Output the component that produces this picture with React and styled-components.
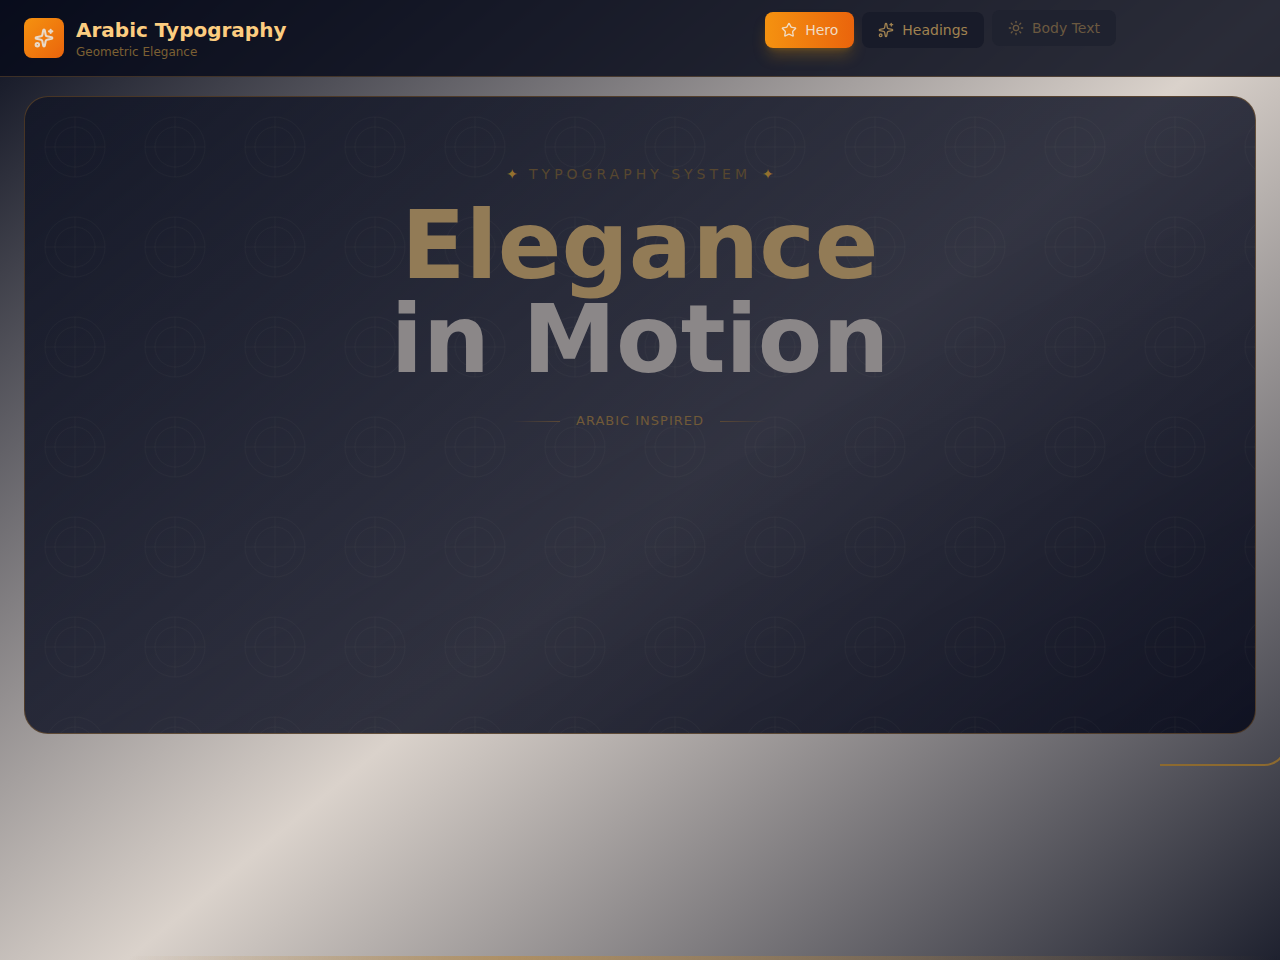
import React from 'react';
import styled, { createGlobalStyle } from 'styled-components';
import { Sparkles, Star, Sun } from 'lucide-react';

const GlobalStyle = createGlobalStyle`
  body {
    margin: 0;
    background: #0a0e1e;
    font-family: "DejaVu Sans", sans-serif;
  }
`;

const Page = styled.div`
  box-sizing: border-box;
  position: relative;
  min-height: 100vh;
  overflow: hidden;
  background: linear-gradient(to bottom right, #0a0e1e, #dad2cb, #0a0e1e) no-repeat;
  background-size: 100% 111%;
`;

const Header = styled.header`
  display: flex;
  align-items: center;
  justify-content: space-between;
  height: 76px;
  padding: 0 24px;
  border-bottom: 1px solid rgba(180, 125, 60, 0.3);
  background: rgba(8, 12, 28, 0.84);
`;

const Brand = styled.div`
  display: flex;
  align-items: center;
  gap: 12px;
`;

const Logo = styled.div`
  display: flex;
  align-items: center;
  justify-content: center;
  width: 40px;
  height: 40px;
  border-radius: 8px;
  color: #e8d9c8;
  background: linear-gradient(to bottom right, #f59210, #ea640c);
`;

const BrandName = styled.div`
  color: #fccd80;
  font-size: 20px;
  font-weight: 700;
  line-height: 28px;
`;

const Tagline = styled.div`
  color: #7c6033;
  font-size: 12px;
  line-height: 16px;
`;

const Nav = styled.nav`
  display: flex;
  align-self: flex-start;
  gap: 8px;
  margin-right: 140px;
  padding-top: 12px;
`;

const NavButton = styled.button`
  display: flex;
  align-items: center;
  gap: 8px;
  height: 36px;
  padding: 0 16px;
  border: 0;
  border-radius: 8px;
  font-family: inherit;
  font-size: 14px;
  line-height: 20px;
  color: #a08250;
  background: #181b29;
  cursor: pointer;

  ${({ $active }) => $active && `
    color: #f0dcc4;
    background: linear-gradient(to right, #f59210, #ea640c);
    box-shadow: 0 10px 15px -3px rgba(245, 158, 11, 0.25), 0 4px 6px -4px rgba(245, 158, 11, 0.25);
  `};

  ${({ $entering }) => $entering && `
    color: #6b5940;
    background: #1f222f;
    transform: translateY(-2px);
  `};
`;

const Main = styled.main`
  padding: 19px 24px;
`;

const Hero = styled.section`
  box-sizing: border-box;
  position: relative;
  display: flex;
  flex-direction: column;
  align-items: center;
  min-height: 638px;
  padding: 64px 32px;
  border: 1px solid rgba(180, 120, 40, 0.35);
  border-radius: 24px;
  overflow: hidden;
  background: linear-gradient(
    to bottom right,
    rgba(18, 22, 38, 0.8),
    rgba(9, 13, 32, 0.8),
    rgba(4, 7, 24, 0.84)
  );
`;

const Pattern = styled.svg`
  position: absolute;
  inset: 0;
  width: 100%;
  height: 100%;
`;

const Eyebrow = styled.div`
  position: relative;
  display: flex;
  gap: 11px;
  color: #57472f;
  font-size: 14px;
  letter-spacing: 4px;
  line-height: 26px;
`;

const Spark = styled.span`
  color: #94712e;
  letter-spacing: 0;
`;

const Title = styled.h1`
  position: relative;
  margin: 12px 0 24px;
  color: #8b8788;
  font-size: 94px;
  font-weight: 700;
  line-height: 94px;
  text-align: center;
`;

const Gold = styled.span`
  display: block;
  color: #927b56;
`;

const Divider = styled.div`
  position: relative;
  display: flex;
  align-items: center;
  gap: 16px;
  color: #715a38;
  font-size: 13px;
  letter-spacing: 1px;
  line-height: 20px;
`;

const Rule = styled.span`
  width: 48px;
  height: 1px;
  background: linear-gradient(to ${({ $to }) => $to}, transparent, #5c4935);
`;

const Corner = styled.div`
  box-sizing: border-box;
  position: absolute;
  top: 638px;
  right: -8px;
  width: 128px;
  height: 128px;
  border-right: 2px solid #8c6a30;
  border-bottom: 2px solid #8c6a30;
  border-bottom-right-radius: 24px;
  clip-path: inset(100px 0 0 0);
`;

const BottomBar = styled.div`
  position: fixed;
  right: 0;
  bottom: 0;
  left: 0;
  height: 4px;
  background: linear-gradient(to right, transparent 10%, rgba(190, 135, 50, 0.5) 40%, transparent);
`;

const navItems = [
  { label: 'Hero', Icon: Star, active: true },
  { label: 'Headings', Icon: Sparkles },
  { label: 'Body Text', Icon: Sun, entering: true },
];

const GeometricPattern = () => (
  <Pattern aria-hidden="true">
    <defs>
      <pattern id="compass" width="100" height="100" patternUnits="userSpaceOnUse">
        <g fill="none" stroke="#b9a58a" strokeOpacity="0.04">
          <circle cx="50" cy="50" r="30" />
          <circle cx="50" cy="50" r="20" />
          <path d="M50 20v60M20 50h60" />
        </g>
      </pattern>
    </defs>
    <rect width="100%" height="100%" fill="url(#compass)" />
  </Pattern>
);

const App = () => (
  <Page>
    <GlobalStyle />
    <Header>
      <Brand>
        <Logo>
          <Sparkles size={20} strokeWidth={2.5} />
        </Logo>
        <div>
          <BrandName>Arabic Typography</BrandName>
          <Tagline>Geometric Elegance</Tagline>
        </div>
      </Brand>
      <Nav>
        {navItems.map(({ label, Icon, active, entering }) => (
          <NavButton key={label} type="button" $active={active} $entering={entering}>
            <Icon size={16} />
            {label}
          </NavButton>
        ))}
      </Nav>
    </Header>
    <Main>
      <Hero>
        <GeometricPattern />
        <Eyebrow>
          <Spark>✦</Spark>
          TYPOGRAPHY SYSTEM
          <Spark>✦</Spark>
        </Eyebrow>
        <Title>
          <Gold>Elegance</Gold>
          in Motion
        </Title>
        <Divider>
          <Rule $to="right" />
          ARABIC INSPIRED
          <Rule $to="left" />
        </Divider>
      </Hero>
    </Main>
    <Corner />
    <BottomBar />
  </Page>
);

export default App;
